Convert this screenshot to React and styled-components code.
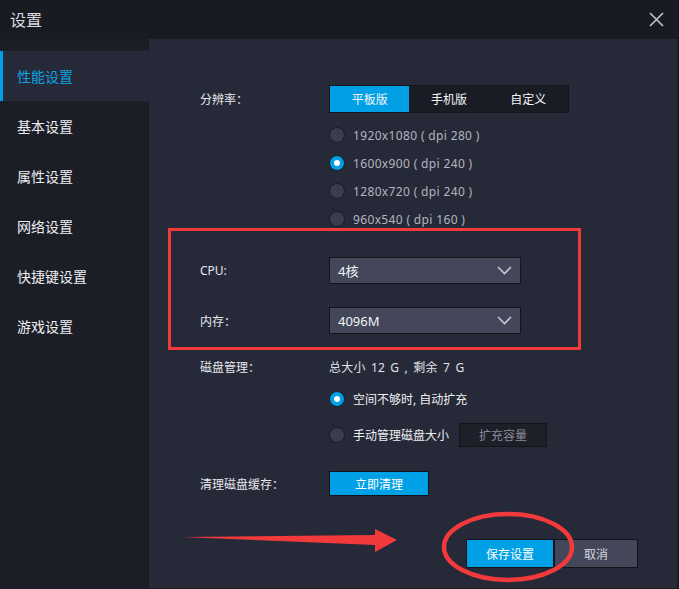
import React from "react";
import styled, { createGlobalStyle } from "styled-components";

const Global = createGlobalStyle`
  html, body { margin: 0; padding: 0; background: #191b22; }
  body { font-family: "Noto Sans", "Noto Sans CJK SC", sans-serif; }
  * { box-sizing: border-box; }
`;

const BLUE = "#00a0e6";

const Window = styled.div`
  position: relative;
  width: 679px;
  height: 589px;
  display: flex;
  flex-direction: column;
  background: #191b22;
  overflow: hidden;
`;

const TitleBar = styled.div`
  height: 39px;
  flex: none;
  display: flex;
  align-items: center;
  justify-content: space-between;
  padding: 0 15px 0 10px;
`;

const Title = styled.div`
  font-size: 16px;
  color: #dcdde2;
  line-height: 1;
`;

const Close = styled.button`
  width: 16px;
  height: 16px;
  padding: 0;
  border: none;
  background: transparent;
  display: flex;
  align-items: center;
  justify-content: center;
`;

const Body = styled.div`
  flex: 1;
  display: flex;
`;

const Sidebar = styled.nav`
  width: 149px;
  flex: none;
  background: #1c1e27;
  padding-top: 12px;
  display: flex;
  flex-direction: column;
`;

const NavItem = styled.div`
  height: 50px;
  display: flex;
  align-items: center;
  font-size: 14px;
  padding-left: ${(p) => (p.$active ? "14px" : "17px")};
  border-left: ${(p) => (p.$active ? `3px solid ${BLUE}` : "none")};
  background: ${(p) => (p.$active ? "#262937" : "transparent")};
  color: ${(p) => (p.$active ? "#0fa2e4" : "#eceef2")};
`;

const Main = styled.main`
  width: 528px;
  height: 549px;
  background: #262937;
  padding: 46px 0 0 51px;
  display: flex;
  flex-direction: column;
`;

const Row = styled.div`
  display: flex;
  align-items: center;
  height: ${(p) => p.$h || 16}px;
  margin-top: ${(p) => p.$mt || 0}px;
  font-size: 12px;
  color: #e2e3e8;
`;

const Label = styled.div`
  width: 129px;
  flex: none;
  font-size: 12px;
  color: #e6e7ec;
`;

const Info = styled.span`
  word-spacing: 2px;
  letter-spacing: 0.2px;
`;

const Segmented = styled.div`
  width: 240px;
  height: 28px;
  display: flex;
  border: 1px solid #13151b;
  background: #1a1c25;
`;

const Segment = styled.div`
  flex: 1;
  display: flex;
  align-items: center;
  justify-content: center;
  font-size: 12px;
  color: #f4f5f8;
  background: ${(p) => (p.$active ? BLUE : "transparent")};
`;

const RadioList = styled.div`
  display: flex;
  flex-direction: column;
  gap: 12px;
  margin-top: 14px;
  padding-left: 129px;
`;

const RadioRow = styled.div`
  display: flex;
  align-items: center;
  height: ${(p) => p.$h || 16}px;
  margin-top: ${(p) => p.$mt || 0}px;
  padding-left: ${(p) => (p.$indent ? 129 : 0)}px;
`;

const Circle = styled.span`
  width: 16px;
  height: 16px;
  border-radius: 50%;
  flex: none;
  border: 1px solid #1a1c24;
  background: ${(p) => (p.$on ? BLUE : "#3a3d4b")};
  display: flex;
  align-items: center;
  justify-content: center;
  &::after {
    content: "";
    display: ${(p) => (p.$on ? "block" : "none")};
    width: 6px;
    height: 6px;
    border-radius: 50%;
    background: #ffffff;
  }
`;

const RadioText = styled.span`
  margin-left: 8px;
  font-size: 12px;
  letter-spacing: ${(p) => (p.$bright ? 0 : 0.35)}px;
  color: ${(p) => (p.$bright ? "#eef0f4" : "#b3b5bf")};
`;

const Highlight = styled.div`
  margin: 1px 0 0 -32px;
  width: 413px;
  border: 3px solid #f23a3c;
  padding: 26px 0 13px 29px;
  display: flex;
  flex-direction: column;
  gap: 23px;
`;

const Select = styled.div`
  width: 192px;
  height: 27px;
  background: #434759;
  border: 1px solid #14161c;
  display: flex;
  align-items: center;
  justify-content: space-between;
  padding: 0 8px 0 8px;
  font-size: 13px;
  color: #f2f3f6;
`;

const Button = styled.button`
  width: ${(p) => p.$w}px;
  height: ${(p) => p.$h}px;
  border: 1px solid #12141a;
  background: ${(p) => (p.$variant === "primary" ? BLUE : p.$variant === "dark" ? "#1d1f29" : "#434759")};
  color: ${(p) => (p.$variant === "dark" ? "#8a8c96" : p.$variant === "primary" ? "#ffffff" : "#d6d8de")};
  font-family: inherit;
  font-size: ${(p) => p.$fs || 12}px;
  padding: 0;
  margin-left: ${(p) => p.$ml || 0}px;
  display: flex;
  align-items: center;
  justify-content: center;
`;

const Footer = styled.div`
  margin-top: 43px;
  display: flex;
  justify-content: flex-end;
  padding-right: 39px;
`;

const Overlay = styled.svg`
  position: absolute;
  left: 0;
  top: 0;
  width: 679px;
  height: 589px;
  pointer-events: none;
`;

const Chevron = () => (
  <svg width="15" height="9" viewBox="0 0 15 9">
    <path d="M1 1 L7.5 7.5 L14 1" fill="none" stroke="#c3c6d2" strokeWidth="1.6" />
  </svg>
);

export default function App() {
  const nav = ["性能设置", "基本设置", "属性设置", "网络设置", "快捷键设置", "游戏设置"];
  const res = [
    "1920x1080 ( dpi 280 )",
    "1600x900 ( dpi 240 )",
    "1280x720 ( dpi 240 )",
    "960x540 ( dpi 160 )",
  ];
  return (
    <>
      <Global />
      <Window>
        <TitleBar>
          <Title>设置</Title>
          <Close aria-label="close">
            <svg width="15" height="15" viewBox="0 0 15 15">
              <path d="M1 1 L14 14 M14 1 L1 14" stroke="#c4c6cc" strokeWidth="1.6" />
            </svg>
          </Close>
        </TitleBar>
        <Body>
          <Sidebar>
            {nav.map((n, i) => (
              <NavItem key={n} $active={i === 0}>
                {n}
              </NavItem>
            ))}
          </Sidebar>
          <Main>
            <Row $h={28}>
              <Label>分辨率：</Label>
              <Segmented>
                <Segment $active>平板版</Segment>
                <Segment>手机版</Segment>
                <Segment>自定义</Segment>
              </Segmented>
            </Row>
            <RadioList>
              {res.map((r, i) => (
                <RadioRow key={r}>
                  <Circle $on={i === 1} />
                  <RadioText>{r}</RadioText>
                </RadioRow>
              ))}
            </RadioList>
            <Highlight>
              <Row $h={27}>
                <Label>CPU:</Label>
                <Select>
                  <span>4核</span>
                  <Chevron />
                </Select>
              </Row>
              <Row $h={27}>
                <Label>内存：</Label>
                <Select>
                  <span>4096M</span>
                  <Chevron />
                </Select>
              </Row>
            </Highlight>
            <Row $mt={9}>
              <Label>磁盘管理：</Label>
              <Info>总大小 12 G , 剩余 7 G</Info>
            </Row>
            <RadioRow $mt={16} $indent>
              <Circle $on />
              <RadioText $bright>空间不够时, 自动扩充</RadioText>
            </RadioRow>
            <RadioRow $mt={16} $h={24} $indent>
              <Circle />
              <RadioText $bright>手动管理磁盘大小</RadioText>
              <Button $w={88} $h={24} $variant="dark" $ml={10}>
                扩充容量
              </Button>
            </RadioRow>
            <Row $mt={24} $h={25}>
              <Label>清理磁盘缓存：</Label>
              <Button $w={100} $h={25} $variant="primary">
                立即清理
              </Button>
            </Row>
            <Footer>
              <Button $w={88} $h={29} $variant="primary" $fs={12}>
                保存设置
              </Button>
              <Button $w={84} $h={29} $fs={12}>
                取消
              </Button>
            </Footer>
          </Main>
        </Body>
        <Overlay viewBox="0 0 679 589">
          <path d="M182 537 L375 535 L375 529 L397 540 L375 552 L375 545 Z" fill="#f23a3c" />
          <ellipse cx="508" cy="547" rx="64" ry="33" fill="none" stroke="#f23a3c" strokeWidth="4.5" />
        </Overlay>
      </Window>
    </>
  );
}
